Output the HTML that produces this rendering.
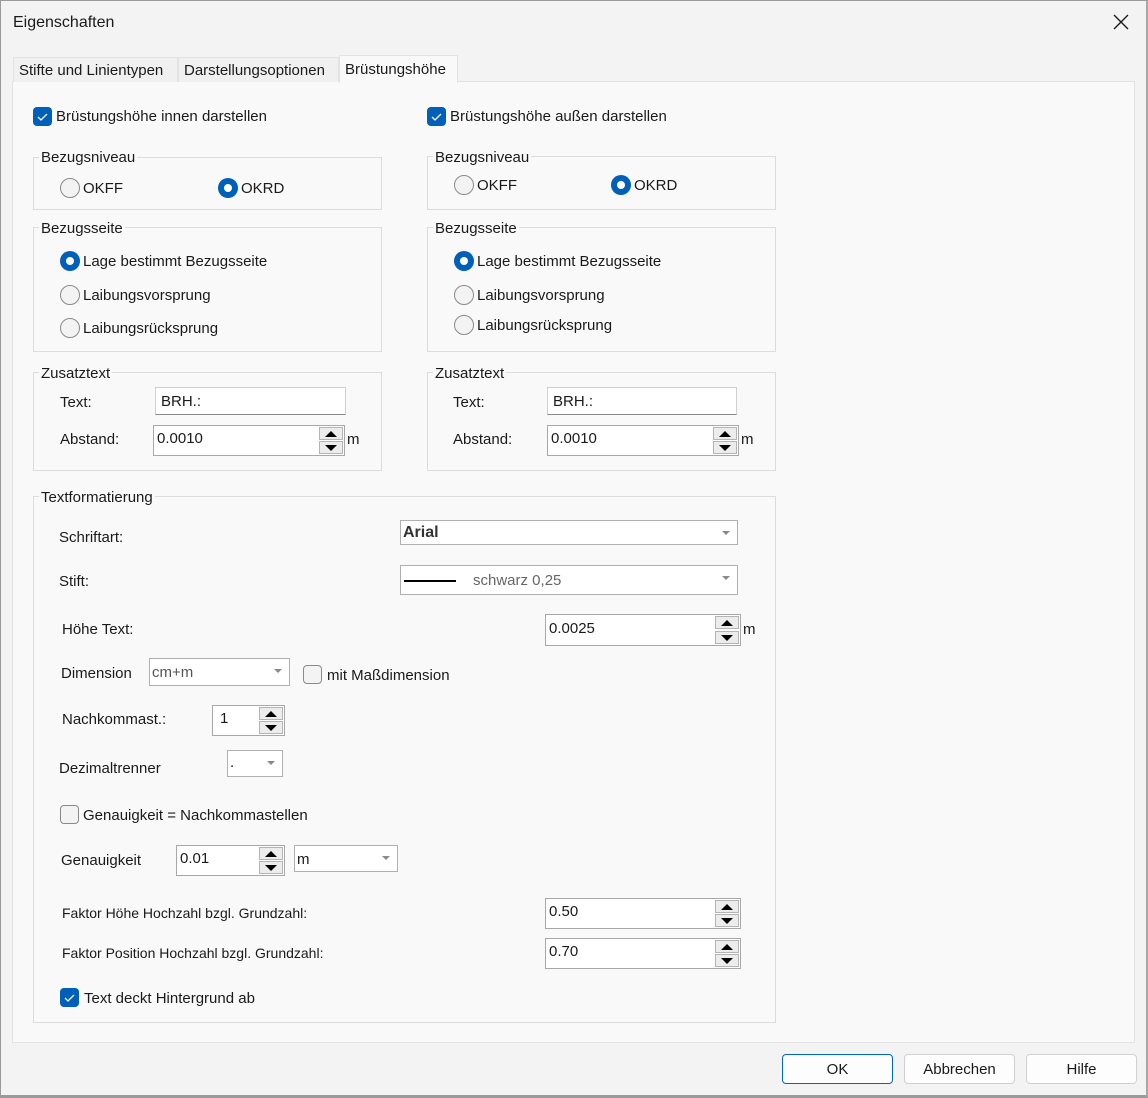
<!DOCTYPE html>
<html><head><meta charset="utf-8">
<style>
*{box-sizing:border-box;margin:0;padding:0}
body{width:1148px;height:1098px;position:relative;background:#f3f3f3;font-family:"Liberation Sans",sans-serif;font-size:15px;color:#1a1a1a;overflow:hidden}
.frame{position:absolute;left:0;top:0;width:1148px;height:1098px;border:1px solid #9a9a9a;border-bottom:3px solid #9a9a9a;border-right:2px solid #a8a8a8}
.a{position:absolute}
.t{position:absolute;line-height:18px;white-space:nowrap;margin-top:1px}
.panel{position:absolute;left:12px;top:81px;width:1123px;height:962px;background:#f9f9f9;border:1px solid #e3e3e3}
.tab{position:absolute;top:57px;height:25px;border:1px solid #e3e3e3;border-bottom:none;background:#f0f0f0;line-height:25px;padding-left:5px;font-size:15px}
.grp{position:absolute;border:1px solid #dcdcdc}
.gl{position:absolute;background:#f9f9f9;line-height:18px;padding:0 2px;white-space:nowrap;margin-top:1px}
.cb{position:absolute;width:19px;height:19px;border-radius:4px;background:#005fb8}
.cbu{position:absolute;width:19px;height:19px;border-radius:4px;background:#f3f3f3;border:1px solid #8a8a8a}
.rd{position:absolute;width:20px;height:20px;border-radius:50%;border:1px solid #8a8a8a;background:#f3f3f3}
.rs{position:absolute;width:20px;height:20px;border-radius:50%;background:#005fb8}
.rs::after{content:"";position:absolute;left:6px;top:6px;width:8px;height:8px;border-radius:50%;background:#fff}
.in{position:absolute;background:#fff;border:1px solid #d0d0d0;border-bottom:1px solid #8a8a8a;line-height:27px;padding-left:5px}
.sp{position:absolute;background:#fff;border:1px solid #a8a8a8;line-height:25px;padding-left:3px}
.sb{position:absolute;right:1px;width:24px;height:13px;background:#ececec;border:1px solid #b4b4b4}
.sb.u{top:1px}.sb.d{bottom:1px}
.sb.u::after{content:"";position:absolute;left:5px;top:3px;border-left:6px solid transparent;border-right:6px solid transparent;border-bottom:6px solid #000}
.sb.d::after{content:"";position:absolute;left:5px;top:3px;border-left:6px solid transparent;border-right:6px solid transparent;border-top:6px solid #000}
.cmb{position:absolute;background:#fff;border:1px solid #b0b0b0;line-height:23px;padding-left:2px}
.cmb::after{content:"";position:absolute;right:7px;top:10px;border-left:4px solid transparent;border-right:4px solid transparent;border-top:4px solid #8a8a8a}
.btn{position:absolute;top:1054px;width:111px;height:30px;border:1px solid #d0d0d0;border-radius:4px;background:#fdfdfd;text-align:center;line-height:30px;font-size:15px}
</style></head><body>
<div class="frame"></div>
<div class="t" style="left:13px;top:13px;font-size:16px">Eigenschaften</div>
<svg class="a" style="left:1113px;top:14px" width="16" height="16"><path d="M1 1L15 15M15 1L1 15" stroke="#1a1a1a" stroke-width="1.4"/></svg>

<div class="panel"></div>
<div class="tab" style="left:13px;width:165px">Stifte und Linientypen</div>
<div class="tab" style="left:178px;width:161px">Darstellungsoptionen</div>
<div class="tab" style="left:339px;top:55px;height:28px;width:119px;background:#f9f9f9;line-height:27px">Brüstungshöhe</div>

<div class="cb" style="left:33px;top:107px"><svg width="19" height="19"><path d="M5 10l3 3 6-6" stroke="#fff" stroke-width="1.3" fill="none"/></svg></div>
<div class="t" style="left:56px;top:107px">Brüstungshöhe innen darstellen</div>
<div class="cb" style="left:427px;top:107px"><svg width="19" height="19"><path d="M5 10l3 3 6-6" stroke="#fff" stroke-width="1.3" fill="none"/></svg></div>
<div class="t" style="left:450px;top:107px">Brüstungshöhe außen darstellen</div>

<div class="grp" style="left:33px;top:157px;width:349px;height:53px"></div>
<div class="gl" style="left:39px;top:148px">Bezugsniveau</div>
<div class="rd" style="left:60px;top:178px"></div><div class="t" style="left:83px;top:179px">OKFF</div>
<div class="rs" style="left:218px;top:178px"></div><div class="t" style="left:241px;top:179px">OKRD</div>

<div class="grp" style="left:427px;top:156px;width:349px;height:54px"></div>
<div class="gl" style="left:433px;top:148px">Bezugsniveau</div>
<div class="rd" style="left:454px;top:175px"></div><div class="t" style="left:477px;top:176px">OKFF</div>
<div class="rs" style="left:611px;top:175px"></div><div class="t" style="left:634px;top:176px">OKRD</div>

<div class="grp" style="left:33px;top:227px;width:349px;height:125px"></div>
<div class="gl" style="left:39px;top:219px">Bezugsseite</div>
<div class="rs" style="left:60px;top:251px"></div><div class="t" style="left:83px;top:252px">Lage bestimmt Bezugsseite</div>
<div class="rd" style="left:60px;top:285px"></div><div class="t" style="left:83px;top:286px">Laibungsvorsprung</div>
<div class="rd" style="left:60px;top:318px"></div><div class="t" style="left:83px;top:319px">Laibungsrücksprung</div>

<div class="grp" style="left:427px;top:227px;width:349px;height:125px"></div>
<div class="gl" style="left:433px;top:219px">Bezugsseite</div>
<div class="rs" style="left:454px;top:251px"></div><div class="t" style="left:477px;top:252px">Lage bestimmt Bezugsseite</div>
<div class="rd" style="left:454px;top:285px"></div><div class="t" style="left:477px;top:286px">Laibungsvorsprung</div>
<div class="rd" style="left:454px;top:315px"></div><div class="t" style="left:477px;top:316px">Laibungsrücksprung</div>

<div class="grp" style="left:33px;top:372px;width:349px;height:99px"></div>
<div class="gl" style="left:39px;top:364px">Zusatztext</div>
<div class="t" style="left:60px;top:393px">Text:</div>
<div class="in" style="left:155px;top:387px;width:191px;height:28px">BRH.:</div>
<div class="t" style="left:60px;top:430px">Abstand:</div>
<div class="sp" style="left:153px;top:425px;width:192px;height:31px">0.0010<div class="sb u"></div><div class="sb d"></div></div>
<div class="t" style="left:347px;top:430px">m</div>

<div class="grp" style="left:427px;top:372px;width:349px;height:99px"></div>
<div class="gl" style="left:433px;top:364px">Zusatztext</div>
<div class="t" style="left:453px;top:393px">Text:</div>
<div class="in" style="left:547px;top:387px;width:190px;height:28px">BRH.:</div>
<div class="t" style="left:453px;top:430px">Abstand:</div>
<div class="sp" style="left:547px;top:425px;width:192px;height:31px">0.0010<div class="sb u"></div><div class="sb d"></div></div>
<div class="t" style="left:741px;top:430px">m</div>

<div class="grp" style="left:33px;top:496px;width:743px;height:527px"></div>
<div class="gl" style="left:39px;top:488px">Textformatierung</div>

<div class="t" style="left:59px;top:528px">Schriftart:</div>
<div class="cmb" style="left:400px;top:520px;width:338px;height:25px;font-size:16px;font-weight:bold;color:#333">Arial</div>

<div class="t" style="left:59px;top:572px">Stift:</div>
<div class="cmb" style="left:400px;top:565px;width:338px;height:30px;line-height:29px;color:#666"><span class="a" style="left:3px;top:14px;width:52px;height:2px;background:#000"></span><span style="margin-left:70px">schwarz 0,25</span></div>

<div class="t" style="left:62px;top:620px">Höhe Text:</div>
<div class="sp" style="left:545px;top:614px;width:196px;height:32px;line-height:27px">0.0025<div class="sb u"></div><div class="sb d"></div></div>
<div class="t" style="left:743px;top:620px">m</div>

<div class="t" style="left:61px;top:664px">Dimension</div>
<div class="cmb" style="left:149px;top:658px;width:141px;height:28px;line-height:27px;color:#555">cm+m</div>
<div class="cbu" style="left:303px;top:665px"></div>
<div class="t" style="left:327px;top:666px">mit Maßdimension</div>

<div class="t" style="left:62px;top:710px">Nachkommast.:</div>
<div class="sp" style="left:212px;top:705px;width:73px;height:31px;padding-left:7px">1<div class="sb u"></div><div class="sb d"></div></div>

<div class="t" style="left:59px;top:759px">Dezimaltrenner</div>
<div class="cmb" style="left:227px;top:750px;width:56px;height:27px">.</div>

<div class="cbu" style="left:60px;top:805px"></div>
<div class="t" style="left:83px;top:806px">Genauigkeit = Nachkommastellen</div>

<div class="t" style="left:61px;top:851px">Genauigkeit</div>
<div class="sp" style="left:176px;top:845px;width:109px;height:31px">0.01<div class="sb u"></div><div class="sb d"></div></div>
<div class="cmb" style="left:294px;top:845px;width:104px;height:27px;line-height:28px">m</div>

<div class="t" style="left:62px;top:903px;font-size:14px">Faktor Höhe Hochzahl bzgl. Grundzahl:</div>
<div class="sp" style="left:545px;top:898px;width:196px;height:31px">0.50<div class="sb u"></div><div class="sb d"></div></div>
<div class="t" style="left:62px;top:943px;font-size:14px">Faktor Position Hochzahl bzgl. Grundzahl:</div>
<div class="sp" style="left:545px;top:938px;width:196px;height:31px">0.70<div class="sb u"></div><div class="sb d"></div></div>

<div class="cb" style="left:60px;top:988px"><svg width="19" height="19"><path d="M5 10l3 3 6-6" stroke="#fff" stroke-width="1.3" fill="none"/></svg></div>
<div class="t" style="left:84px;top:989px">Text deckt Hintergrund ab</div>

<div class="btn" style="left:782px;border-color:#0067c0">OK</div>
<div class="btn" style="left:904px">Abbrechen</div>
<div class="btn" style="left:1026px">Hilfe</div>
</body></html>
